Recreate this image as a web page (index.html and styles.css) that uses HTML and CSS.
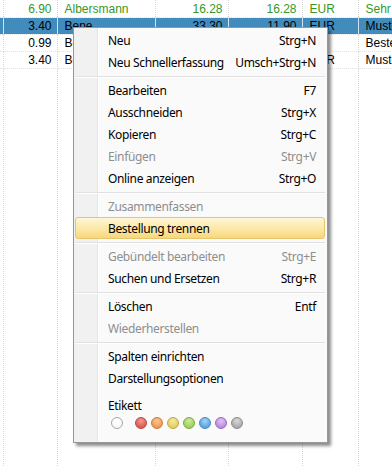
FILE: index.html
```html
<!DOCTYPE html>
<html lang="de">

<head>
    <meta charset="UTF-8">
    <meta name="viewport" content="width=device-width, initial-scale=1.0">
    <title>Bestellungen</title>
    <link rel="stylesheet" href="styles.css">
</head>

<body>
    <div class="liste">
        <table class="tab">
            <colgroup>
                <col class="c0">
                <col class="c1">
                <col class="c2">
                <col class="c3">
                <col class="c4">
                <col class="c5">
                <col class="c6">
            </colgroup>
            <tr class="zeile erledigt">
                <td></td>
                <td class="zahl">6.90</td>
                <td>Albersmann</td>
                <td class="zahl">16.28</td>
                <td class="zahl">16.28</td>
                <td>EUR</td>
                <td>Sehr gut</td>
            </tr>
            <tr class="zeile aktiv">
                <td></td>
                <td class="zahl">3.40</td>
                <td>Bene</td>
                <td class="zahl">33.30</td>
                <td class="zahl">11.90</td>
                <td>EUR</td>
                <td>Mustermann</td>
            </tr>
            <tr class="zeile">
                <td></td>
                <td class="zahl">0.99</td>
                <td>Bene</td>
                <td class="zahl">0.99</td>
                <td class="zahl">0.99</td>
                <td></td>
                <td>Bestellung</td>
            </tr>
            <tr class="zeile">
                <td></td>
                <td class="zahl">3.40</td>
                <td>Bene</td>
                <td class="zahl">3.40</td>
                <td class="zahl">3.40</td>
                <td>EUR</td>
                <td>Mustermann</td>
            </tr>
            <tr class="rest">
                <td></td>
                <td></td>
                <td></td>
                <td></td>
                <td></td>
                <td></td>
                <td></td>
            </tr>
        </table>

        <!-- Kontextmenü -->
        <div class="menu">
            <div class="eintrag"><span>Neu</span><span>Strg+N</span></div>
            <div class="eintrag"><span>Neu Schnellerfassung</span><span>Umsch+Strg+N</span></div>
            <div class="trenner"></div>
            <div class="eintrag"><span>Bearbeiten</span><span>F7</span></div>
            <div class="eintrag"><span>Ausschneiden</span><span>Strg+X</span></div>
            <div class="eintrag"><span>Kopieren</span><span>Strg+C</span></div>
            <div class="eintrag aus"><span>Einfügen</span><span>Strg+V</span></div>
            <div class="eintrag"><span>Online anzeigen</span><span>Strg+O</span></div>
            <div class="trenner"></div>
            <div class="eintrag aus"><span>Zusammenfassen</span></div>
            <div class="eintrag hover"><span>Bestellung trennen</span></div>
            <div class="trenner"></div>
            <div class="eintrag aus"><span>Gebündelt bearbeiten</span><span>Strg+E</span></div>
            <div class="eintrag"><span>Suchen und Ersetzen</span><span>Strg+R</span></div>
            <div class="trenner"></div>
            <div class="eintrag"><span>Löschen</span><span>Entf</span></div>
            <div class="eintrag aus"><span>Wiederherstellen</span></div>
            <div class="trenner"></div>
            <div class="eintrag"><span>Spalten einrichten</span></div>
            <div class="eintrag"><span>Darstellungsoptionen</span></div>
            <div class="etikett">
                <p class="etikett-titel">Etikett</p>
                <div class="punkte">
                    <span class="punkt weiss"></span>
                    <span class="punkt rot"></span>
                    <span class="punkt orange"></span>
                    <span class="punkt gelb"></span>
                    <span class="punkt gruen"></span>
                    <span class="punkt blau"></span>
                    <span class="punkt lila"></span>
                    <span class="punkt grau"></span>
                </div>
            </div>
        </div>
    </div>
</body>

</html>
```

FILE: styles.css
```css
body {
    margin: 0;
    background-color: #fff;
    overflow: hidden;
}

.liste {
    position: relative;
    width: 392px;
    height: 466px;
    overflow: hidden;
}

.tab {
    border-collapse: collapse;
    table-layout: fixed;
    width: 430px;
    font-family: 'Liberation Sans', Arial, sans-serif;
    font-size: 12px;
    color: #000;
}

.c0 { width: 3px; }
.c1 { width: 54px; }
.c2 { width: 98px; }
.c3 { width: 73px; }
.c4 { width: 74px; }
.c5 { width: 56px; }
.c6 { width: 72px; }

.tab td {
    height: 17px;
    padding: 1px 0 0 7px;
    border-right: 1px dotted #d6d6d6;
    border-bottom: 1px dotted #e2e2e2;
    white-space: nowrap;
    overflow: hidden;
    box-sizing: border-box;
}

.tab td:first-child {
    padding: 0;
}

.tab .zahl {
    text-align: right;
    padding: 1px 5px 0 0;
}

.erledigt td {
    color: #37981f;
}

.aktiv td {
    background-color: #428bbd;
    border-right: 1px solid #cfe2f0;
}

.rest td {
    height: 400px;
    border-bottom: 0;
}

/* Kontextmenü */

.menu {
    position: absolute;
    left: 73px;
    top: 27px;
    width: 253px;
    padding: 1px 0 0 0;
    border: 1px solid #979797;
    background: linear-gradient(to right, #f1f1f1 0 23px, #e3e3e3 23px 24px, #fff 24px 25px, #fafafa 25px);
    box-shadow: 3px 3px 3px rgba(0, 0, 0, 0.45);
    font-family: 'Noto Sans', sans-serif;
    font-size: 12px;
    letter-spacing: -0.35px;
    color: #000;
}

.eintrag {
    display: flex;
    justify-content: space-between;
    align-items: center;
    height: 22px;
    box-sizing: border-box;
    margin: 0 2px 0 1px;
    padding: 0 8px 0 32px;
    border: 1px solid transparent;
    border-radius: 3px;
}

.eintrag.aus {
    color: #8e8e8e;
}

.eintrag.hover {
    border-color: #e5c66c;
    background: linear-gradient(#fef6d6, #fbe7a5 55%, #f7d77d);
}

.trenner {
    margin: 3px 2px 1px 2px;
    border-top: 1px solid #e0e0e0;
    border-bottom: 1px solid #fff;
}

.etikett {
    padding: 9px 0 13px 34px;
}

.etikett-titel {
    margin: 0;
    line-height: 16px;
}

.punkte {
    display: flex;
    gap: 4px;
    margin: 3px 0 0 3px;
}

.punkt {
    width: 10px;
    height: 10px;
    border-radius: 50%;
    border: 1px solid #888;
}

.punkt.weiss {
    margin-right: 8px;
    border-color: #a8a8a8;
    background: radial-gradient(circle at 50% 35%, #fff, #f4f4f4);
}

.punkt.rot {
    border-color: #b44a44;
    background: radial-gradient(circle at 50% 30%, #f59a92, #dd5a52 70%);
}

.punkt.orange {
    border-color: #c57d3f;
    background: radial-gradient(circle at 50% 30%, #fcc794, #ee9a55 70%);
}

.punkt.gelb {
    border-color: #bca748;
    background: radial-gradient(circle at 50% 30%, #f6e9a0, #e3cf62 70%);
}

.punkt.gruen {
    border-color: #7ea64a;
    background: radial-gradient(circle at 50% 30%, #cdeaa0, #9fcf5e 70%);
}

.punkt.blau {
    border-color: #4a87bd;
    background: radial-gradient(circle at 50% 30%, #a6d3f5, #5aa6e2 70%);
}

.punkt.lila {
    border-color: #9a6bba;
    background: radial-gradient(circle at 50% 30%, #e1c3f3, #bc8ce0 70%);
}

.punkt.grau {
    border-color: #8c8c8c;
    background: radial-gradient(circle at 50% 30%, #dadada, #aaaaaa 70%);
}
```
